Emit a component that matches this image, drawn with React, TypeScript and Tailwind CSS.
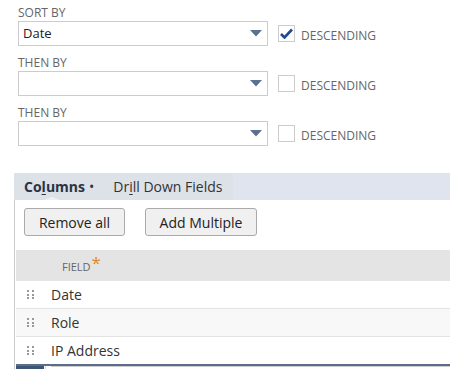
import React from 'react';

const font = { fontFamily: '"Open Sans", "Liberation Sans", sans-serif' };

function Caret() {
  return (
    <svg width="12" height="7" viewBox="0 0 12 7" className="shrink-0">
      <path d="M0 0 H12 L6 6.5 Z" fill="#5b7194" />
    </svg>
  );
}

function SortRow({ label, value, checked }: { label: string; value?: string; checked?: boolean }) {
  return (
    <div className="mb-[9px]">
      <div className="text-[12px] leading-[16px] text-[#666] uppercase">{label}</div>
      <div className="flex items-start">
        <div className="w-[250px] h-[25px] border border-[#cccccc] flex items-center pl-[4px] pr-[5px] bg-white">
          <span className="flex-1 text-[13px] text-[#222]">{value}</span>
          <Caret />
        </div>
        <div className="ml-[10px] mt-[4px] w-[17px] h-[17px] border border-[#cccccc] bg-white flex items-center justify-center">
          {checked && (
            <svg width="13" height="11" viewBox="0 0 13 11">
              <path d="M1 6 L4.5 9.5 L12 1.5" stroke="#1f4b8e" strokeWidth="2.6" fill="none" />
            </svg>
          )}
        </div>
        <span className="ml-[6px] mt-[7px] text-[12px] leading-[16px] text-[#666]">DESCENDING</span>
      </div>
    </div>
  );
}

function Handle() {
  return (
    <div className="grid grid-cols-[2px_2px] gap-x-[3px] gap-y-[1.5px]">
      {Array.from({ length: 6 }).map((_, i) => (
        <span key={i} className="w-[2px] h-[2px] bg-[#999]" />
      ))}
    </div>
  );
}

const rows = ['Date', 'Role', 'IP Address'];

export default function App() {
  return (
    <div className="w-[450px] h-[369px] overflow-hidden bg-white" style={font}>
      <div className="pl-[18px] pt-[5px]">
        <SortRow label="Sort by" value="Date" checked />
        <SortRow label="Then by" />
        <SortRow label="Then by" />
      </div>

      <div className="ml-[14px] mt-[27px] h-[27px] bg-[#dfe4ee] flex items-stretch">
        <div className="relative flex items-center bg-[#dde1e8] pl-[10px] pr-[8px] text-[14px] font-bold text-[#2b3442]">
          Co<span className="underline underline-offset-2">l</span>umns
          <span className="ml-[4px] font-normal">•</span>
          <span className="absolute left-[30px] bottom-0 w-0 h-0 border-x-[8px] border-x-transparent border-b-[3px] border-b-[#eef0f4]" />
        </div>
        <div className="flex items-center bg-[#dde1e8] pl-[11px] pr-[11px] text-[14px] text-[#333]">
          Dr<span className="underline underline-offset-2">i</span>ll Down Fields
        </div>
      </div>

      <div className="ml-[14px] border-l border-[#cccccc] pl-px">
        <div className="flex gap-[20px] pl-[8px] pt-[8px] pb-[14px]">
          <button className="h-[28px] w-[101px] rounded-[3px] border border-[#aaaaaa] bg-[#f0f0f0] text-[14px] text-[#222]">
            Remove all
          </button>
          <button className="h-[28px] w-[112px] rounded-[3px] border border-[#aaaaaa] bg-[#f0f0f0] text-[14px] text-[#222]">
            Add Multiple
          </button>
        </div>

        <div className="h-[31px] bg-[#e4e4e4] flex items-center pl-[46px]">
          <span className="text-[11px] text-[#666] uppercase mt-[3px]">Field</span>
          <span className="text-[17px] leading-none text-[#e0891e] ml-[1px] -mt-[7px]">*</span>
        </div>

        {rows.map((r, i) => (
          <div
            key={r}
            className={`h-[28px] flex items-center border-b border-[#e3e3e3] ${i === 1 ? 'bg-[#f8f8f8]' : 'bg-white'}`}
          >
            <div className="w-[35px] flex pl-[11px]">
              <Handle />
            </div>
            <span className="text-[14px] text-[#333]">{r}</span>
          </div>
        ))}

        <div className="h-[2px] bg-[#5a6e8c] -mt-[1px]" />
        <div className="flex h-[4px]">
          <div className="w-[28px] bg-[#3f5578]" />
          <div className="w-px bg-[#d8d8d8] ml-px" />
          <div className="flex-1 border-t border-[#cccccc] ml-[5px]" />
        </div>
      </div>
    </div>
  );
}
